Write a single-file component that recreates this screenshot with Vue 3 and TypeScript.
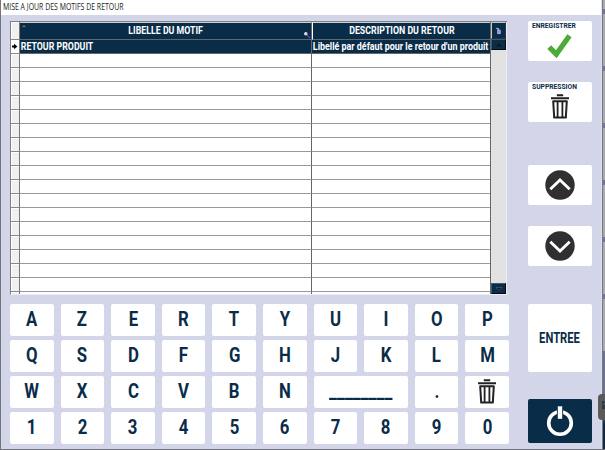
<script setup lang="ts">
interface Key {
  label: string
  kind?: 'space' | 'trash'
}

const toKeys = (letters: string): Key[] => letters.split('').map((label) => ({ label }))

const keys: Key[] = [
  ...toKeys('AZERTYUIOP'),
  ...toKeys('QSDFGHJKLM'),
  ...toKeys('WXCVBN'),
  { label: '________', kind: 'space' },
  { label: '.' },
  { label: '', kind: 'trash' },
  ...toKeys('1234567890'),
]

const emptyRows = 18
</script>

<template>
  <div class="screen">
    <div class="window">
      <header class="titlebar"><span>MISE A JOUR DES MOTIFS DE RETOUR</span></header>
      <div class="body">
        <main class="left">
          <div class="table">
            <div class="rows">
              <div class="row head">
                <div class="sel"></div>
                <div class="c1">
                  <i class="sort"></i>
                  <span class="cond">LIBELLE DU MOTIF</span>
                  <svg class="loupe" viewBox="0 0 8 8"><path d="M4 4L7 7" stroke="#4b43e0" stroke-width="1.5" /><circle cx="2.8" cy="2.8" r="1.8" fill="#dcdcdc" /></svg>
                </div>
                <div class="c2"><span class="cond">DESCRIPTION DU RETOUR</span></div>
              </div>
              <div class="row active">
                <div class="sel">
                  <svg viewBox="0 0 7 7"><path d="M1 2.5H3V.8L6.4 3.5L3 6.2V4.5H1Z" fill="#000" /></svg>
                </div>
                <div class="c1"><span class="cond">RETOUR PRODUIT</span></div>
                <div class="c2"><span class="cond desc">Libellé par défaut pour le retour d'un produit</span></div>
              </div>
              <div v-for="n in emptyRows" :key="n" class="row">
                <div class="sel"></div>
                <div class="c1"></div>
                <div class="c2"></div>
              </div>
            </div>
            <div class="scroll">
              <div class="corner">
                <svg viewBox="0 0 8 8"><path d="M1 1H4V3M3 3H6V7H3Z" fill="#8f91dc" stroke="#c0c0f2" stroke-width=".9" /></svg>
              </div>
              <div class="arrow"><svg viewBox="0 0 6 4"><path d="M0 3.5L3 .5L6 3.5Z" fill="#10151a" /></svg></div>
              <div class="track"></div>
              <div class="arrow"><svg viewBox="0 0 6 4"><path d="M0 .5H6L3 3.5Z" fill="#10151a" stroke="#6a7d8f" stroke-width=".5" /></svg></div>
            </div>
          </div>
          <div class="keys">
            <button v-for="(k, i) in keys" :key="i" class="key" :class="k.kind">
              <svg v-if="k.kind === 'trash'" class="bin" viewBox="0 0 18 25">
                <path d="M5.8 1.2H12.2M0 4.2H18" stroke="#222" stroke-width="2" />
                <path d="M2.2 7.2H15.8L14.8 23.6H3.2Z" fill="none" stroke="#222" stroke-width="2" stroke-linejoin="round" />
                <path d="M6.6 7V23M11.4 7V23" stroke="#222" stroke-width="1.8" />
              </svg>
              <span v-else class="cond">{{ k.label }}</span>
            </button>
          </div>
        </main>
        <aside class="side">
          <button class="btn save">
            <span class="cond">ENREGISTRER</span>
            <svg viewBox="0 0 25 24"><path d="M2.2 13.2L9.3 20.2L22.5 1.8" fill="none" stroke="#4caa38" stroke-width="5.3" /></svg>
          </button>
          <button class="btn delete">
            <span class="cond">SUPPRESSION</span>
            <svg viewBox="0 0 18 25">
              <path d="M5.8 1.2H12.2M0 4.2H18" stroke="#222" stroke-width="2" />
              <path d="M2.2 7.2H15.8L14.8 23.6H3.2Z" fill="none" stroke="#222" stroke-width="2" stroke-linejoin="round" />
              <path d="M6.6 7V23M11.4 7V23" stroke="#222" stroke-width="1.8" />
            </svg>
          </button>
          <button class="btn up">
            <svg viewBox="0 0 30 30"><circle cx="15" cy="15" r="14.7" fill="#303030" /><path d="M5.3 19.3L15 10L24.7 19.3" fill="none" stroke="#fff" stroke-width="2.9" /></svg>
          </button>
          <button class="btn down">
            <svg viewBox="0 0 30 30"><circle cx="15" cy="15" r="14.7" fill="#303030" /><path d="M5.3 10.7L15 20L24.7 10.7" fill="none" stroke="#fff" stroke-width="2.9" /></svg>
          </button>
          <button class="btn enter"><span class="cond">ENTREE</span></button>
          <button class="btn power">
            <svg viewBox="0 0 28 32"><circle cx="14" cy="18" r="11.3" fill="none" stroke="#fff" stroke-width="3.6" /><path d="M14 1V13" stroke="#092c49" stroke-width="6.2" /><path d="M14 1.3V13.8" stroke="#fff" stroke-width="4.4" /></svg>
          </button>
        </aside>
      </div>
    </div>
    <div class="edge"><i v-for="n in 6" :key="n"></i><b></b></div>
    <div class="tab"><span>G</span></div>
  </div>
</template>

<style>
body {
  overflow: hidden;
}
</style>

<style scoped>
.screen {
  position: relative;
  display: flex;
  box-sizing: border-box;
  width: 605px;
  height: 450px;
  padding-left: 1px;
  background: #74747c;
  font-family: Roboto, "Liberation Sans", sans-serif;
  color: #092c49;
}
.window {
  width: 601px;
  height: 449px;
  background: #d3d5e9;
  border-right: 1px solid #e0e0ec;
  box-sizing: border-box;
}
.titlebar {
  height: 15px;
  background: #fff;
  color: #222;
  font: 8.3px/14px "Open Sans", "Noto Sans", sans-serif;
  padding-left: 1.5px;
  white-space: nowrap;
}
.titlebar span {
  display: inline-block;
  transform: scaleX(0.835);
  transform-origin: left;
}
.body {
  display: flex;
}
.left {
  width: 517px;
  padding: 6px 0 0 9px;
  box-sizing: border-box;
}
.cond {
  display: inline-block;
  white-space: nowrap;
  font-weight: 700;
  transform: scaleX(0.8);
}
.table {
  display: flex;
  width: 497px;
  height: 274px;
  overflow: hidden;
  box-sizing: border-box;
  border-top: 1px solid #808080;
  border-left: 1px solid #808080;
  border-bottom: 1px solid #eceef4;
  background: #fff;
}
.rows {
  width: 480px;
  border-right: 1px solid #666;
  box-sizing: border-box;
}
.row {
  display: grid;
  grid-template-columns: 9px 292px 1fr;
  height: 14px;
  box-sizing: border-box;
}
.sel {
  border-right: 1px solid #777;
  border-bottom: 1px solid #888;
  background: #f0f0f0;
  box-shadow: inset 1px 1px #fff;
}
.c1,
.c2 {
  border-bottom: 1px solid #999;
  min-width: 0;
}
.c1 {
  border-right: 1px solid #666;
}
.head {
  height: 18px;
  color: #fff;
  font-size: 11px;
  line-height: 16px;
}
.head .c1,
.head .c2 {
  position: relative;
  text-align: center;
  background: #092c49;
  border-top: 1px solid #d0d0d0;
  border-bottom-color: #666;
}
.head .c2 {
  border-left: 1px solid #fff;
}
.sort {
  position: absolute;
  left: 2px;
  top: 2px;
  border: 2px solid transparent;
  border-top: 0;
  border-bottom: 2px solid #77756c;
}
.loupe {
  position: absolute;
  right: 0;
  bottom: 0;
  width: 8px;
  height: 8px;
}
.active {
  color: #fff;
  font-size: 11px;
  line-height: 13px;
}
.active .c1,
.active .c2 {
  background: #092c49;
  border-bottom-color: #666;
}
.active .cond {
  transform-origin: left;
  padding-left: 1px;
}
.active .desc {
  transform: scaleX(0.81);
}
.active .sel {
  display: flex;
  align-items: center;
  background: #fff;
}
.active .sel svg {
  width: 7px;
  height: 7px;
}
.scroll {
  display: flex;
  flex-direction: column;
  width: 15px;
  border-right: 1px solid #eee;
}
.corner {
  height: 17px;
  box-sizing: border-box;
  display: flex;
  align-items: center;
  justify-content: center;
  background: #092c49;
  border: 1px solid #c8c8c8;
  border-right-color: #333;
  border-bottom-color: #333;
}
.corner svg {
  width: 7px;
  height: 8px;
}
.arrow {
  height: 11px;
  box-sizing: border-box;
  display: flex;
  align-items: center;
  justify-content: center;
  background: #092c49;
  border: 1px solid #44576a;
  border-right-color: #0a0a0a;
  border-bottom-color: #0a0a0a;
}
.arrow svg {
  width: 6px;
  height: 4px;
}
.track {
  flex: 1;
  background: #e2e2e2;
}
.keys {
  display: grid;
  grid-template-columns: repeat(10, 43.6px);
  grid-auto-rows: 32px;
  gap: 4px 7px;
  margin-top: 9px;
}
.key,
.btn {
  display: flex;
  align-items: center;
  justify-content: center;
  box-sizing: border-box;
  padding: 0;
  border: 0;
  border-radius: 2px;
  background: #fff;
  color: #092c49;
  font-family: inherit;
}
.key {
  font-size: 19.5px;
  line-height: 32px;
}
.key .cond {
  transform: scaleX(0.86);
}
.space {
  grid-column: span 2;
}
.key.space .cond {
  transform: scaleX(0.91);
}
.bin {
  width: 18px;
  height: 25px;
  margin-bottom: 1px;
}
.side {
  width: 65px;
  padding: 6px 0 0 9.5px;
}
.btn {
  width: 64.5px;
  height: 40px;
}
.save,
.delete {
  flex-direction: column;
  justify-content: flex-start;
  font-size: 8px;
  line-height: 10px;
}
.save .cond,
.delete .cond {
  align-self: flex-start;
  transform: scaleX(0.84);
  transform-origin: left;
  margin-left: 4.3px;
}
.delete .cond {
  margin-left: 4.8px;
}
.save svg {
  width: 25px;
  height: 24px;
  margin-top: 3px;
}
.delete {
  margin-top: 21px;
}
.delete svg {
  width: 18px;
  height: 25px;
  margin-top: 2px;
}
.up {
  margin-top: 43px;
}
.down {
  margin-top: 21px;
}
.up svg,
.down svg {
  width: 30px;
  height: 30px;
  margin-bottom: 1px;
}
.enter {
  height: 68px;
  margin-top: 38px;
  font-size: 14px;
}
.power {
  height: 44px;
  margin-top: 27px;
  background: #092c49;
}
.power svg {
  width: 28px;
  height: 32px;
  margin-bottom: 1px;
}
.edge {
  flex: 1;
  display: flex;
  flex-direction: column;
  gap: 52px;
  height: 449px;
  padding-top: 9px;
  box-sizing: border-box;
  background: #aaa9ad;
  border-left: 1px solid #777988;
}
.edge i {
  flex: none;
  height: 5px;
  background: #737596;
}
.edge b {
  flex: 1;
  background: linear-gradient(#6c7088 60%, #13283f 75%);
}
.tab {
  position: absolute;
  left: 598px;
  top: 394px;
  width: 7px;
  height: 26px;
  box-sizing: border-box;
  padding: 6px 0 0 3.5px;
  border-radius: 4px 0 0 4px;
  background: #5a5a5a;
  color: #0c1420;
  font: bold 10px/12px "Liberation Sans", sans-serif;
}
.tab span {
  display: block;
  width: 8px;
  transform: scaleX(0.35);
  transform-origin: left;
}
</style>
